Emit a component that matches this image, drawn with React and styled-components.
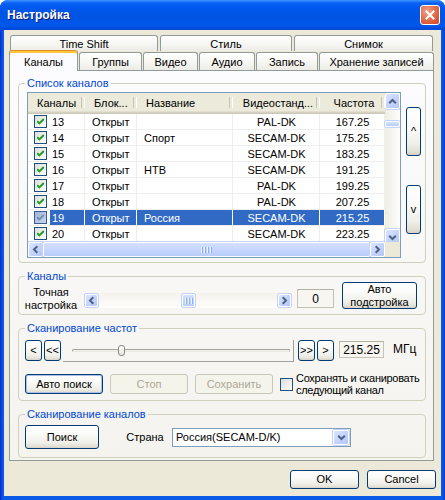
import React from "react";
import styled, { createGlobalStyle } from "styled-components";

const FONT = '"Liberation Sans", Arial, sans-serif';

const GlobalStyle = createGlobalStyle`
  html, body { margin: 0; padding: 0; background: #ffffff; }
  body { font: 11px ${FONT}; color: #000; }
  * { box-sizing: border-box; }
`;

const rows = [
  { n: 13, name: "", std: "PAL-DK", f: "167.25" },
  { n: 14, name: "Спорт", std: "SECAM-DK", f: "175.25" },
  { n: 15, name: "", std: "SECAM-DK", f: "183.25" },
  { n: 16, name: "НТВ", std: "SECAM-DK", f: "191.25" },
  { n: 17, name: "", std: "PAL-DK", f: "199.25" },
  { n: 18, name: "", std: "PAL-DK", f: "207.25" },
  { n: 19, name: "Россия", std: "SECAM-DK", f: "215.25", sel: true },
  { n: 20, name: "", std: "SECAM-DK", f: "223.25" },
];

const cols = [
  { t: "Каналы", w: 57, a: "flex-start" },
  { t: "Блок...", w: 52, a: "flex-start" },
  { t: "Название", w: 96, a: "flex-start" },
  { t: "Видеостанд...", w: 87, a: "center" },
  { t: "Частота", w: 65, a: "center" },
];

const backTabs = [
  { t: "Time Shift", w: 148 },
  { t: "Стиль", w: 132 },
  { t: "Снимок", w: 139 },
];

const frontTabs = [
  { t: "Каналы", w: 69, active: true },
  { t: "Группы", w: 63 },
  { t: "Видео", w: 55 },
  { t: "Аудио", w: 56 },
  { t: "Запись", w: 62 },
  { t: "Хранение записей", w: 115 },
];

const Window = styled.div`
  width: 445px;
  height: 500px;
  display: flex;
  flex-direction: column;
  background: linear-gradient(90deg, #0019cf 0, #0842d8 1px, #0a5ae8 3px, #0a5ae8 442px, #0842d8 444px);
  border-radius: 8px 8px 0 0;
  overflow: hidden;
`;

const TitleBar = styled.div`
  height: 30px;
  flex: none;
  display: flex;
  align-items: center;
  justify-content: space-between;
  padding: 0 5px 1px 7px;
  background: linear-gradient(180deg, #3d95ff 0%, #0a62f6 10%, #0058ee 22%, #0054e3 55%, #0057eb 85%, #0046d5 100%);
`;

const Title = styled.span`
  font: bold 12px ${FONT};
  color: #ffffff;
  text-shadow: 1px 1px #0a1883;
`;

const CloseButton = styled.div`
  width: 20px;
  height: 20px;
  border: 1px solid #ffffff;
  border-radius: 3px;
  background: radial-gradient(circle at 35% 30%, #f0a48c 0%, #e5704f 45%, #cc4422 100%);
  display: flex;
  align-items: center;
  justify-content: center;
`;

const Body = styled.div`
  flex: 1;
  margin: 0 4px 4px;
  background: #ece9d8;
  padding: 5px 7px 0 5px;
  display: flex;
  flex-direction: column;
`;

const TabRow = styled.div`
  display: flex;
  align-items: flex-end;
  gap: ${(p) => (p.back ? 2 : 1)}px;
  height: ${(p) => (p.back ? 16 : 19)}px;
  padding-left: ${(p) => (p.back ? 1 : 0)}px;
`;

const Tab = styled.div`
  width: ${(p) => p.w}px;
  height: ${(p) => (p.active ? 21 : p.back ? 16 : 18)}px;
  margin-bottom: ${(p) => (p.active ? -1 : 0)}px;
  position: relative;
  z-index: ${(p) => (p.active ? 2 : 0)};
  border: 1px solid #919b9c;
  border-bottom: none;
  border-top-color: ${(p) => (p.active ? "#e68b2c" : "#919b9c")};
  border-radius: 3px 3px 0 0;
  background: ${(p) =>
    p.active
      ? "#fcfcfe"
      : "linear-gradient(180deg, #ffffff 0%, #f7f7f4 50%, #ecebe6 100%)"};
  box-shadow: ${(p) => (p.active ? "inset 0 2px #ffc83c" : "none")};
  display: flex;
  align-items: center;
  justify-content: center;
  padding-top: ${(p) => (p.active ? 1 : 0)}px;
  font: 11px ${FONT};
  white-space: nowrap;
`;

const Panel = styled.div`
  height: 391px;
  flex: none;
  border: 1px solid #919b9c;
  background: linear-gradient(180deg, #fcfcfe 0%, #f4f3ee 100%);
  padding: 6px 7px 0 8px;
  display: flex;
  flex-direction: column;
  gap: 7px;
`;

const Group = styled.fieldset`
  margin: 0;
  min-width: 0;
  height: ${(p) => p.h}px;
  border: 1px solid #d0d0bf;
  border-radius: 4px;
  padding: ${(p) => p.pt}px 4px 0 6px;
`;

const Legend = styled.legend`
  color: #0046d5;
  font: 11px ${FONT};
  line-height: 13px;
  padding: 0 2px;
  margin-left: 0;
`;

const Line = styled.div`
  display: flex;
  align-items: ${(p) => p.align || "flex-start"};
  margin-top: ${(p) => p.mt || 0}px;
`;

const ListView = styled.div`
  margin-left: 2px;
  width: 374px;
  height: 166px;
  flex: none;
  border: 1px solid #7f9db9;
  background: #ffffff;
  display: grid;
  grid-template-columns: 357px 15px;
  grid-template-rows: 149px 15px;
  overflow: hidden;
`;

const Table = styled.div`
  overflow: hidden;
`;

const HeaderRow = styled.div`
  display: flex;
  height: 21px;
`;

const HeaderCell = styled.div`
  width: ${(p) => p.w}px;
  flex: none;
  position: relative;
  display: flex;
  align-items: center;
  justify-content: ${(p) => p.a};
  padding: 0 6px 2px 9px;
  background: #ebeadb;
  box-shadow: inset 0 -1px #cbc7b8, inset 0 -2px #d6d2c2, inset 0 -3px #e2decd;
  white-space: nowrap;
  &::after {
    content: "";
    position: absolute;
    right: 0;
    top: 4px;
    bottom: 6px;
    width: 2px;
    border-left: 1px solid #c7c5b2;
    border-right: 1px solid #ffffff;
  }
`;

const DataRow = styled.div`
  display: flex;
  height: 16px;
`;

const Cell = styled.div`
  width: ${(p) => p.w}px;
  flex: none;
  display: flex;
  align-items: center;
  justify-content: ${(p) => p.a};
  padding: 0 6px 0 7px;
  border-right: 1px solid ${(p) => (p.sel ? "#ffffff" : "#eeeeee")};
  border-bottom: 1px solid #eeeeee;
  background: ${(p) => (p.sel ? "#316ac5" : "transparent")};
  color: ${(p) => (p.sel ? "#ffffff" : "#000000")};
  white-space: nowrap;
`;

const FirstCell = styled.div`
  width: ${(p) => p.w}px;
  flex: none;
  display: flex;
  align-items: stretch;
  padding-left: 6px;
  border-right: 1px solid ${(p) => (p.sel ? "#ffffff" : "#eeeeee")};
  border-bottom: 1px solid #eeeeee;
`;

const NumLabel = styled.span`
  flex: 1;
  margin-left: 3px;
  padding-left: 2px;
  display: flex;
  align-items: center;
  background: ${(p) => (p.sel ? "#316ac5" : "transparent")};
  color: ${(p) => (p.sel ? "#ffffff" : "#000000")};
`;

const CheckBox = styled.span`
  width: 13px;
  height: 13px;
  flex: none;
  align-self: center;
  margin-left: ${(p) => p.ml || 0}px;
  border: 1px solid ${(p) => (p.sel ? "#3c5d92" : "#1c5180")};
  background: ${(p) =>
    p.sel ? "linear-gradient(135deg, #9fb4d8, #c9d6ee)" : "linear-gradient(135deg, #dcdcd7, #ffffff)"};
  display: flex;
  align-items: center;
  justify-content: center;
`;

const VScroll = styled.div`
  display: flex;
  flex-direction: column;
  background: linear-gradient(90deg, #eeede5, #fdfdfa);
`;

const HScroll = styled.div`
  display: flex;
  background: linear-gradient(180deg, #eeede5, #fdfdfa);
`;

const Corner = styled.div`
  background: #ece9d8;
`;

const ScrollBtn = styled.div`
  width: ${(p) => p.w || 15}px;
  height: ${(p) => p.h || 15}px;
  flex: none;
  margin-top: ${(p) => p.mt || 0}px;
  border: 1px solid #ffffff;
  border-radius: 2px;
  background: linear-gradient(135deg, #dbe6fe 0%, #c4d4fc 50%, #b4c8f6 100%);
  box-shadow: 0 0 0 1px #c3d3fd;
  display: flex;
  align-items: center;
  justify-content: center;
`;

const ChevronSvg = styled.svg`
  transform: rotate(${(p) => p.rot}deg);
`;

const Chevron = ({ dir }) => {
  const rot = { up: 0, right: 90, down: 180, left: 270 }[dir];
  return (
    <ChevronSvg rot={rot} width="9" height="9" viewBox="0 0 9 9">
      <path d="M1.2 6.3 L4.5 3 L7.8 6.3" fill="none" stroke="#4d6185" strokeWidth="2" />
    </ChevronSvg>
  );
};

const HThumb = styled.div`
  flex: 1;
  border: 1px solid #ffffff;
  border-radius: 2px;
  background: linear-gradient(180deg, #d4e0fd 0%, #c6d6fc 50%, #b9cdfa 100%);
  box-shadow: 0 0 0 1px #c3d3fd;
  display: flex;
  align-items: center;
  justify-content: center;
  gap: 1px;
`;

const SmallThumb = styled.div`
  width: ${(p) => p.w}px;
  height: ${(p) => p.h}px;
  flex: none;
  margin: ${(p) => p.m};
  border: 1px solid #ffffff;
  border-radius: 2px;
  background: linear-gradient(180deg, #d4e0fd, #b9cdfa);
  box-shadow: 0 0 0 1px #c3d3fd;
  display: flex;
  align-items: center;
  justify-content: center;
  gap: 1px;
`;

const Grip = styled.span`
  width: 2px;
  height: 6px;
  border-left: 1px solid #eef4fe;
  border-right: 1px solid #8cb0f8;
`;

const SideButtons = styled.div`
  margin-left: 5px;
  padding-top: 15px;
  display: flex;
  flex-direction: column;
  gap: 29px;
`;

const XPButton = styled.div`
  width: ${(p) => p.w}px;
  height: ${(p) => p.h}px;
  flex: none;
  margin-left: ${(p) => p.ml || 0}px;
  border: 1px solid ${(p) => (p.disabled ? "#c9c7ba" : "#003c74")};
  border-radius: 3px;
  background: ${(p) =>
    p.disabled
      ? "#f5f4ea"
      : "linear-gradient(180deg, #ffffff 0%, #fbfbf9 35%, #f0efe9 75%, #e3e0d6 92%, #d6d0c5 100%)"};
  box-shadow: ${(p) => (p.focus ? "inset 0 0 0 1px #a8c0ec" : "none")};
  color: ${(p) => (p.disabled ? "#aca899" : "#000000")};
  display: flex;
  align-items: center;
  justify-content: center;
  text-align: center;
  font: 11px ${FONT};
  line-height: 13px;
  white-space: pre-line;
`;

const FineLabel = styled.div`
  width: 64px;
  margin-left: -6px;
  margin-top: 4px;
  text-align: center;
  line-height: 13px;
`;

const FineScroll = styled.div`
  width: 208px;
  height: 15px;
  margin: 11px 0 0 1px;
  display: flex;
  align-items: center;
  padding: 0 1px;
  background: linear-gradient(180deg, #f3f1ec, #fefefb);
`;

const Track = styled.div`
  flex: 1;
  display: flex;
  align-items: center;
`;

const EditBox = styled.div`
  width: ${(p) => p.w}px;
  height: ${(p) => p.h}px;
  flex: none;
  margin: ${(p) => p.m};
  border: 1px solid #c5c2b2;
  border-top-color: #b4b1a1;
  background: #f7f6f1;
  display: flex;
  align-items: center;
  justify-content: center;
  font: 12px ${FONT};
`;

const TrackBar = styled.div`
  width: 231px;
  height: 22px;
  flex: none;
  position: relative;
  margin: 0 4px 0 2px;
  border-right: 1px solid #a0a0a0;
  border-bottom: 1px solid #a0a0a0;
  padding: 9px 3px 0 9px;
`;

const Channel = styled.div`
  height: 3px;
  border-radius: 2px;
  border: 1px solid #a6a59c;
  border-bottom-color: #e9e8e1;
  background: #f0efe9;
`;

const TrackThumb = styled.div`
  position: absolute;
  top: 5px;
  width: 7px;
  height: 11px;
  border: 1px solid #8a8a82;
  border-radius: 3px;
  background: linear-gradient(180deg, #ffffff, #e4e3dc);
`;

const Unit = styled.span`
  margin: 2px 0 0 9px;
  font: 12px ${FONT};
`;

const OptionLabel = styled.div`
  margin-left: 3px;
  line-height: 12px;
  text-align: left;
  white-space: nowrap;
  letter-spacing: -0.3px;
`;

const CountryLabel = styled.span`
  width: 54px;
  margin-left: 19px;
`;

const Combo = styled.div`
  width: 179px;
  height: 19px;
  border: 1px solid #7f9db9;
  background: #ffffff;
  display: flex;
  align-items: center;
  padding: 0 1px 0 3px;
  justify-content: space-between;
  font: 11px ${FONT};
`;

const Footer = styled.div`
  display: flex;
  justify-content: flex-end;
  gap: 8px;
  margin: 9px -2px 0 0;
`;

const trackValue = 0.21;

export default function App() {
  return (
    <>
      <GlobalStyle />
      <Window>
        <TitleBar>
          <Title>Настройка</Title>
          <CloseButton>
            <svg width="10" height="10" viewBox="0 0 10 10">
              <path d="M1.5 1.5 L8.5 8.5 M8.5 1.5 L1.5 8.5" stroke="#ffffff" strokeWidth="2" strokeLinecap="square" />
            </svg>
          </CloseButton>
        </TitleBar>
        <Body>
          <TabRow back>
            {backTabs.map((t) => (
              <Tab key={t.t} w={t.w} back>
                {t.t}
              </Tab>
            ))}
          </TabRow>
          <TabRow>
            {frontTabs.map((t) => (
              <Tab key={t.t} w={t.w} active={t.active}>
                {t.t}
              </Tab>
            ))}
          </TabRow>
          <Panel>
            <Group h={186} pt={2}>
              <Legend>Список каналов</Legend>
              <Line>
                <ListView>
                  <Table>
                    <HeaderRow>
                      {cols.map((c) => (
                        <HeaderCell key={c.t} w={c.w} a={c.a}>
                          {c.t}
                        </HeaderCell>
                      ))}
                    </HeaderRow>
                    {rows.map((r) => (
                      <DataRow key={r.n}>
                        <FirstCell w={cols[0].w} sel={r.sel}>
                          <CheckBox sel={r.sel}>
                            <svg width="11" height="11" viewBox="0 0 11 11">
                              <path
                                d="M2.2 5.2 L4.4 7.4 L8.8 3"
                                fill="none"
                                stroke={r.sel ? "#6f8fb8" : "#21a121"}
                                strokeWidth="2"
                              />
                            </svg>
                          </CheckBox>
                          <NumLabel sel={r.sel}>{r.n}</NumLabel>
                        </FirstCell>
                        <Cell w={cols[1].w} a="flex-start" sel={r.sel}>
                          Открыт
                        </Cell>
                        <Cell w={cols[2].w} a="flex-start" sel={r.sel}>
                          {r.name}
                        </Cell>
                        <Cell w={cols[3].w} a="center" sel={r.sel}>
                          {r.std}
                        </Cell>
                        <Cell w={cols[4].w} a="center" sel={r.sel}>
                          {r.f}
                        </Cell>
                      </DataRow>
                    ))}
                  </Table>
                  <VScroll>
                    <ScrollBtn h={16}>
                      <Chevron dir="up" />
                    </ScrollBtn>
                    <SmallThumb w={15} h={6} m="12px 0 0 0" />
                    <ScrollBtn h={16} mt={102}>
                      <Chevron dir="down" />
                    </ScrollBtn>
                  </VScroll>
                  <HScroll>
                    <ScrollBtn>
                      <Chevron dir="left" />
                    </ScrollBtn>
                    <HThumb>
                      <Grip />
                      <Grip />
                      <Grip />
                      <Grip />
                    </HThumb>
                    <ScrollBtn>
                      <Chevron dir="right" />
                    </ScrollBtn>
                  </HScroll>
                  <Corner />
                </ListView>
                <SideButtons>
                  <XPButton w={15} h={49}>^</XPButton>
                  <XPButton w={15} h={49}>v</XPButton>
                </SideButtons>
              </Line>
            </Group>

            <Group h={45} pt={0}>
              <Legend>Каналы</Legend>
              <Line mt={-1}>
                <FineLabel>
                  Точная
                  <br />
                  настройка
                </FineLabel>
                <FineScroll>
                  <ScrollBtn w={13} h={13}>
                    <Chevron dir="left" />
                  </ScrollBtn>
                  <Track>
                    <SmallThumb w={13} h={13} m="0 0 0 84px">
                      <Grip />
                      <Grip />
                      <Grip />
                    </SmallThumb>
                  </Track>
                  <ScrollBtn w={13} h={13}>
                    <Chevron dir="right" />
                  </ScrollBtn>
                </FineScroll>
                <EditBox w={37} h={19} m="7px 0 0 5px">
                  0
                </EditBox>
                <XPButton w={75} h={27} ml={8}>
                  {"Авто\nподстройка"}
                </XPButton>
              </Line>
            </Group>

            <Group h={79} pt={5}>
              <Legend>Сканирование частот</Legend>
              <Line align="flex-start">
                <XPButton w={17} h={21}>&lt;</XPButton>
                <XPButton w={17} h={21} ml={2}>
                  &lt;&lt;
                </XPButton>
                <TrackBar>
                  <Channel />
                  <TrackThumb style={{ left: 9 + Math.round(trackValue * 218) }} />
                </TrackBar>
                <XPButton w={17} h={21}>&gt;&gt;</XPButton>
                <XPButton w={17} h={21} ml={2}>
                  &gt;
                </XPButton>
                <EditBox w={45} h={17} m="1px 0 0 5px">
                  215.25
                </EditBox>
                <Unit>МГц</Unit>
              </Line>
              <Line mt={10} align="center">
                <XPButton w={78} h={20} focus>
                  Авто поиск
                </XPButton>
                <XPButton w={78} h={20} disabled ml={7}>
                  Стоп
                </XPButton>
                <XPButton w={78} h={20} disabled ml={7}>
                  Сохранить
                </XPButton>
                <CheckBox ml={7} />
                <OptionLabel>
                  Сохранять и сканировать
                  <br />
                  следующий канал
                </OptionLabel>
              </Line>
            </Group>

            <Group h={50} pt={4}>
              <Legend>Сканирование каналов</Legend>
              <Line align="center">
                <XPButton w={74} h={24}>Поиск</XPButton>
                <CountryLabel>Страна</CountryLabel>
                <Combo>
                  Россия(SECAM-D/K)
                  <ScrollBtn w={16} h={15}>
                    <Chevron dir="down" />
                  </ScrollBtn>
                </Combo>
              </Line>
            </Group>
          </Panel>
          <Footer>
            <XPButton w={69} h={19}>OK</XPButton>
            <XPButton w={69} h={19}>Cancel</XPButton>
          </Footer>
        </Body>
      </Window>
    </>
  );
}
